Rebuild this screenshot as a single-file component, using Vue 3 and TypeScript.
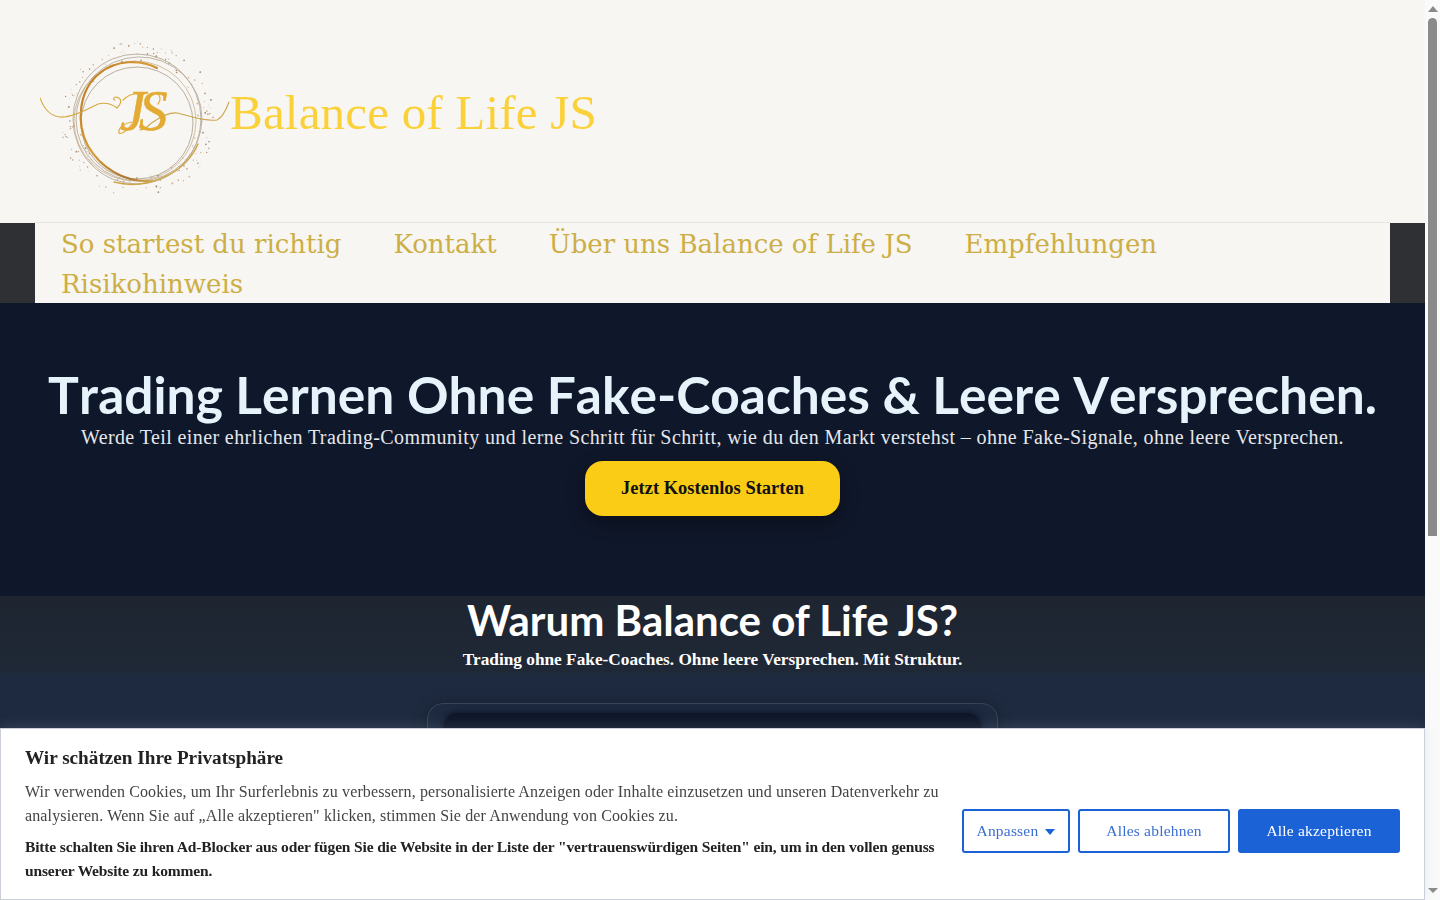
<template>
  <div class="shell">
    <div class="page">
      <header class="site-head">
        <svg class="logo" viewBox="0 0 190 156" width="190" height="156" aria-label="Balance of Life JS Logo">
          <defs>
            <linearGradient id="goldRing" x1="0" y1="0" x2="1" y2="1">
              <stop offset="0" stop-color="#b9761f" />
              <stop offset="0.45" stop-color="#d99a35" />
              <stop offset="0.8" stop-color="#a9742d" />
              <stop offset="1" stop-color="#e0b95a" />
            </linearGradient>
          </defs>
          <circle v-for="d in dots" :key="d.id" :cx="d.x" :cy="d.y" :r="d.r" :fill="d.c" />
          <ellipse cx="97" cy="79" rx="64" ry="65" fill="none" stroke="#b5a999" stroke-width="0.9" />
          <ellipse cx="99" cy="79" rx="63" ry="62" fill="none" stroke="#bdb0a0" stroke-width="0.9" transform="rotate(-12 99 79)" />
          <ellipse cx="95" cy="81" rx="61" ry="60" fill="none" stroke="#c9b08c" stroke-width="0.8" />
          <circle cx="97" cy="83" r="56" fill="none" stroke="#a89a88" stroke-width="0.8" />
          <path d="M117 28 C100 19 76 20 60 33 C38 50 36 84 48 106 C60 127 84 143 112 141" fill="none" stroke="url(#goldRing)" stroke-width="2.2" stroke-linecap="round" />
          <path d="M74 142 C104 150 144 136 158 104" fill="none" stroke="#cda64c" stroke-width="1.5" stroke-linecap="round" />
          <path d="M0 58 C5 72 14 78 24 77 C36 76 50 68 58 64 C66 62 72 64 77 68 C82 63 82 58 76 57 C73 57 73 60 75 60" fill="none" stroke="#d5a93f" stroke-width="1.1" stroke-linecap="round" />
          <path d="M100 90 C106 90 109 84 113 82 C122 76 130 72 137 73 C146 75 165 82 177 80 C182 78 186 70 189 62" fill="none" stroke="#cda64c" stroke-width="1.1" stroke-linecap="round" />
          <path d="M83 60 C88 55 94 53 100 54 M92 82 C84 83 78 88 79 93 C81 95 88 90 92 84 M116 53 C121 55 121 61 118 64" fill="none" stroke="#e3ab33" stroke-width="1.2" stroke-linecap="round" />
          <text class="mono" x="80" y="90">JS</text>
        </svg>
        <span class="brand">Balance of Life JS</span>
      </header>

      <nav class="nav-band">
        <ul class="nav-list">
          <li v-for="item in navItems" :key="item"><a href="#">{{ item }}</a></li>
        </ul>
      </nav>

      <section class="hero">
        <h1>Trading Lernen Ohne Fake-Coaches &amp; Leere Versprechen.</h1>
        <p>Werde Teil einer ehrlichen Trading-Community und lerne Schritt für Schritt, wie du den Markt verstehst – ohne Fake-Signale, ohne leere Versprechen.</p>
        <a class="cta" href="#">Jetzt Kostenlos Starten</a>
      </section>

      <section class="why">
        <h2>Warum Balance of Life JS?</h2>
        <p>Trading ohne Fake-Coaches. Ohne leere Versprechen. Mit Struktur.</p>
      </section>

      <section class="video-area">
        <div class="video-card">
          <div class="video-inner"></div>
        </div>
      </section>
    </div>

    <div class="scrollbar">
      <i class="arrow up"></i>
      <div class="thumb"></div>
      <i class="arrow down"></i>
    </div>

    <aside class="cookie">
      <div class="cookie-text">
        <h3>Wir schätzen Ihre Privatsphäre</h3>
        <p>Wir verwenden Cookies, um Ihr Surferlebnis zu verbessern, personalisierte Anzeigen oder Inhalte einzusetzen und unseren Datenverkehr zu<br />analysieren. Wenn Sie auf „Alle akzeptieren" klicken, stimmen Sie der Anwendung von Cookies zu.</p>
        <p class="strong">Bitte schalten Sie ihren Ad-Blocker aus oder fügen Sie die Website in der Liste der "vertrauenswürdigen Seiten" ein, um in den vollen genuss<br />unserer Website zu kommen.</p>
      </div>
      <div class="cookie-actions">
        <button class="btn outline custom" type="button">Anpassen <i class="caret"></i></button>
        <button class="btn outline reject" type="button">Alles ablehnen</button>
        <button class="btn solid accept" type="button">Alle akzeptieren</button>
      </div>
    </aside>
  </div>
</template>

<script setup lang="ts">
interface Dot {
  id: number;
  x: number;
  y: number;
  r: number;
  c: string;
}

const navItems: string[] = [
  "So startest du richtig",
  "Kontakt",
  "Über uns Balance of Life JS",
  "Empfehlungen",
  "Risikohinweis"
];

// glitter around the logo ring, seeded so it stays the same between runs
let seed = 17;
function rnd(): number {
  seed = (seed * 16807) % 2147483647;
  return seed / 2147483647;
}

const dots: Dot[] = Array.from({ length: 170 }, (_, id) => {
  const a = rnd() * Math.PI * 2;
  const dist = 58 + rnd() * 20;
  return {
    id,
    x: 98 + Math.cos(a) * dist,
    y: 79 + Math.sin(a) * dist,
    r: 0.35 + rnd() * 0.6,
    c: rnd() > 0.5 ? "#a58a6c" : "#cdb096"
  };
});
</script>

<style>
html, body { margin: 0; padding: 0; overflow: hidden; background: #1e2a3f; }
</style>

<style scoped>
.shell { display: flex; height: 900px; }
.page { width: 1425px; height: 900px; flex: none; overflow: hidden; background: #1e2a3f; font-family: "Liberation Serif", serif; }
.site-head { height: 223px; box-sizing: border-box; padding: 40px 0 0 40px; background: #f7f6f3; display: flex; align-items: flex-start; }
.logo { display: block; flex: none; }
.mono { font-family: "Liberation Serif", serif; font-style: italic; font-size: 58px; fill: #e3ab33; stroke: #e3ab33; stroke-width: 0.5px; letter-spacing: -7px; }
.brand { margin: 40px 0 0; font-family: "Liberation Serif", serif; font-size: 49px; line-height: 66px; color: #fbd13a; letter-spacing: 0.2px; }
.nav-band { height: 80px; background: #2f3033; padding: 0 35px; }
.nav-list { list-style: none; margin: 0; padding: 1px 0 0; box-sizing: border-box; height: 80px; display: flex; flex-wrap: wrap; align-content: flex-start; background: #f7f6f3; box-shadow: 0 -1px 0 #e4e4e2; }
.nav-list a { display: block; padding: 0 26px; font-family: "DejaVu Serif", serif; font-size: 26px; line-height: 40px; color: #cdae45; text-decoration: none; }
.hero { height: 293px; box-sizing: border-box; padding: 62px 0 0; background: #0f172a; text-align: center; }
.hero h1 { margin: 0; font-family: Lato, sans-serif; font-weight: 700; font-size: 51.5px; line-height: 58px; color: #e6f3fb; font-kerning: none; }
.hero p { margin: -1px 0 0; font-size: 20px; line-height: 30px; color: #e5e7eb; letter-spacing: 0.4px; }
.cta { display: block; width: 255px; height: 55px; margin: 9px auto 0; border-radius: 18px; background: #facc15; color: #111; font-size: 18.5px; font-weight: 700; line-height: 55px; text-decoration: none; box-shadow: 0 6px 18px rgba(0, 0, 0, 0.4); }
.why { height: 77px; background: linear-gradient(#1e2531, #1f2836); text-align: center; color: #fff; }
.why h2 { margin: 0; padding-top: 1px; font-family: Lato, sans-serif; font-weight: 700; font-size: 42px; line-height: 47px; }
.why p { margin: 4px 0 0; font-size: 17.3px; line-height: 24px; font-weight: 700; }
.video-area { padding-top: 30px; display: flex; justify-content: center; background: #1e2a3f; }
.video-card { width: 571px; height: 340px; box-sizing: border-box; padding: 9px 16px; border: 1px solid #36445a; border-radius: 16px; background: #1e2a3f; box-shadow: 0 0 14px rgba(0, 0, 0, 0.25); }
.video-inner { height: 320px; border-radius: 14px; background: #0f172a; box-shadow: 0 0 6px 1px #0f172a; }
.scrollbar { width: 15px; height: 900px; flex: none; position: relative; background: #fafafa; display: flex; flex-direction: column; align-items: center; }
.arrow { display: block; width: 0; height: 0; border-left: 5px solid transparent; border-right: 5px solid transparent; }
.arrow.up { margin-top: 6px; border-bottom: 6px solid #8a8a8a; }
.arrow.down { margin-top: 352px; border-top: 5px solid #8a8a8a; }
.thumb { width: 9px; height: 518px; margin-top: 6px; border-radius: 5px 5px 0 0; background: #8a8a8a; }
.cookie { position: fixed; left: 0; bottom: 0; width: 1425px; height: 172px; box-sizing: border-box; padding: 17px 24px 0; border: 1px solid #cbd0d8; background: #fff; display: flex; color: #2b2b2b; box-shadow: 0 -2px 12px rgba(148, 163, 184, 0.2); }
.cookie-text { width: 937px; flex: none; }
.cookie-text h3 { margin: 0 0 10px; font-size: 19.2px; line-height: 24px; font-weight: 700; color: #222; }
.cookie-text p { margin: 0 0 7px; font-size: 16px; line-height: 24px; color: #444; letter-spacing: 0.125px; white-space: nowrap; }
.cookie-text p.strong { font-size: 15.5px; font-weight: 700; color: #222; letter-spacing: -0.15px; }
.cookie-actions { display: flex; gap: 8px; margin-top: 63px; height: 44px; }
.btn { box-sizing: border-box; height: 44px; padding: 0; border-radius: 3px; font-family: "Liberation Serif", serif; font-size: 15.5px; letter-spacing: 0.2px; cursor: pointer; }
.btn.outline { background: #fff; border: 2px solid #1a62d6; color: #3a6fd0; }
.btn.solid { background: #1a62d6; border: 2px solid #1a62d6; color: #fff; }
.custom { width: 108px; }
.reject { width: 152px; }
.accept { width: 162px; }
.caret { display: inline-block; width: 0; height: 0; margin-left: 3px; vertical-align: 1px; border-left: 5.5px solid transparent; border-right: 5.5px solid transparent; border-top: 6px solid #1a62d6; }
</style>
